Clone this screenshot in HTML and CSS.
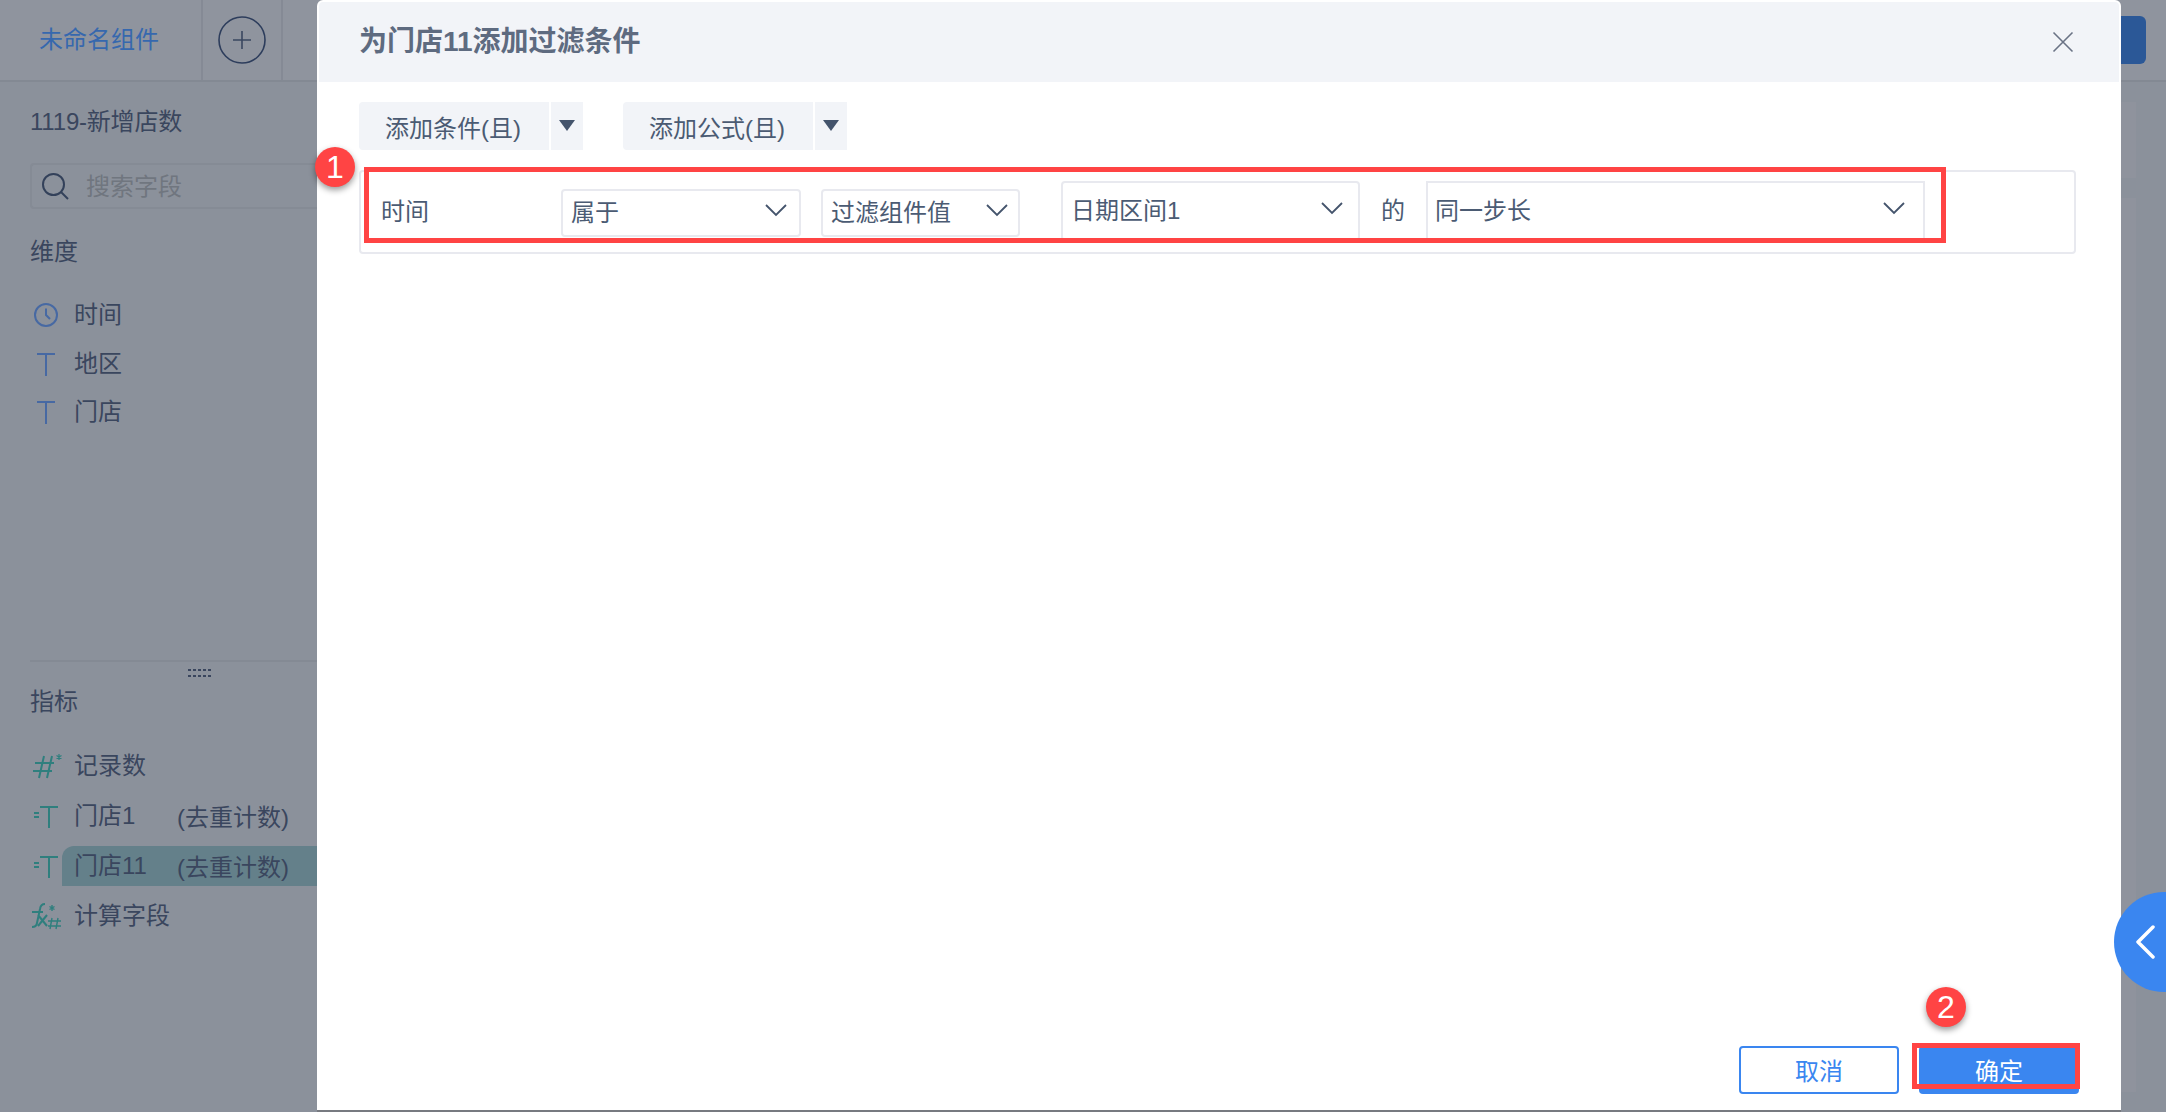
FILE: index.html
```html
<!DOCTYPE html>
<html lang="zh-CN">
<head>
<meta charset="utf-8">
<title>为门店11添加过滤条件</title>
<link rel="stylesheet" href="styles.css">
</head>
<body>
<div class="app">
  <header class="topbar">
    <div class="tab">未命名组件</div>
    <div class="tab-add">
      <svg width="48" height="48" viewBox="0 0 48 48"><circle cx="24" cy="24" r="23" fill="none" stroke="#2d3d5c" stroke-width="1.6"/><path d="M24 15v18M15 24h18" stroke="#3a4760" stroke-width="1.6"/></svg>
    </div>
    <div class="tab-rest"></div>
    <div class="publish"></div>
  </header>
  <div class="workspace">
    <aside class="sidebar">
      <div class="dataset">1119-新增店数</div>
      <div class="search">
        <svg width="28" height="28" viewBox="0 0 28 28"><circle cx="12.500" cy="12.500" r="10.500" fill="none" stroke="#33415a" stroke-width="2"/><path d="M20 20l7 7" stroke="#33415a" stroke-width="2"/></svg>
        <span>搜索字段</span>
      </div>
      <div class="group-title dim-title">维度</div>
      <ul class="fields">
        <li class="field"><svg class="ficon" width="26" height="26" viewBox="0 0 26 26"><circle cx="13" cy="13" r="11" fill="none" stroke="#4769a3" stroke-width="2"/><path d="M13 6.500V13l4 4" fill="none" stroke="#4769a3" stroke-width="2"/></svg><span>时间</span></li>
        <li class="field"><svg class="ficon" width="26" height="26" viewBox="0 0 26 26"><path d="M4 3h18M13 3v22" fill="none" stroke="#4769a3" stroke-width="2"/></svg><span>地区</span></li>
        <li class="field"><svg class="ficon" width="26" height="26" viewBox="0 0 26 26"><path d="M4 3h18M13 3v22" fill="none" stroke="#4769a3" stroke-width="2"/></svg><span>门店</span></li>
      </ul>
      <div class="measures">
        <div class="grip"></div>
        <div class="group-title">指标</div>
        <ul class="fields measure-list">
          <li class="field"><svg class="ficon" width="32" height="30" viewBox="0 0 32 30"><path d="M9 27l5-22M17 27l5-22M5 12h19M3 20h19" fill="none" stroke="#2f7f7e" stroke-width="2"/><path d="M29 3v6M26.500 4.500l5 3M31.500 4.500l-5 3" fill="none" stroke="#2f7f7e" stroke-width="1.200"/></svg><span>记录数</span></li>
          <li class="field"><svg class="ficon" width="32" height="30" viewBox="0 0 32 30"><path d="M4 12h5M4 16h5M10 6h18M19 6v21" fill="none" stroke="#2f7f7e" stroke-width="2"/></svg><span class="fname">门店1</span><span class="fagg">(去重计数)</span></li>
          <li class="field field-active"><svg class="ficon" width="32" height="30" viewBox="0 0 32 30"><path d="M4 12h5M4 16h5M10 6h18M19 6v21" fill="none" stroke="#2f7f7e" stroke-width="2"/></svg><span class="fname">门店11</span><span class="fagg">(去重计数)</span></li>
          <li class="field"><svg class="ficon" width="32" height="30" viewBox="0 0 32 30"><path d="M15 3c-3.500 0-4.500 1.500-5 5L7 22c-.5 3-2 4-5 4M2 11h11M8 14l9 11M17 14l-9 11" fill="none" stroke="#2f7f7e" stroke-width="2"/><path d="M22 4v6M19.500 5.500l5 3M24.500 5.500l-5 3M22 17l-2 11M28 17l-2 11M18 20h13M18 25h13" fill="none" stroke="#2f7f7e" stroke-width="1.400"/></svg><span>计算字段</span></li>
        </ul>
      </div>
    </aside>
    <div class="canvas">
      <div class="panel panel-top"></div>
      <div class="panel panel-bottom"></div>
    </div>
  </div>
</div>

<section class="dialog">
  <div class="dialog-head">
    <h1>为门店11添加过滤条件</h1>
    <svg width="22" height="22" viewBox="0 0 22 22"><path d="M1.500 1.500l19 19M20.500 1.500l-19 19" stroke="#6a7385" stroke-width="1.600"/></svg>
  </div>
  <div class="toolbar">
    <div class="split"><button class="split-main">添加条件(且)</button><button class="split-caret"><i></i></button></div>
    <div class="split"><button class="split-main">添加公式(且)</button><button class="split-caret"><i></i></button></div>
  </div>
  <div class="condition">
    <span class="cond-label">时间</span>
    <div class="select sel-op"><span>属于</span><svg width="22" height="13" viewBox="0 0 22 13"><path d="M1 1l10 10L21 1" fill="none" stroke="#44546c" stroke-width="1.800"/></svg></div>
    <div class="select sel-type"><span>过滤组件值</span><svg width="22" height="13" viewBox="0 0 22 13"><path d="M1 1l10 10L21 1" fill="none" stroke="#44546c" stroke-width="1.800"/></svg></div>
    <div class="select sel-tall sel-widget"><span>日期区间1</span><svg width="22" height="13" viewBox="0 0 22 13"><path d="M1 1l10 10L21 1" fill="none" stroke="#44546c" stroke-width="1.800"/></svg></div>
    <span class="cond-of">的</span>
    <div class="select sel-tall sel-step"><span>同一步长</span><svg width="22" height="13" viewBox="0 0 22 13"><path d="M1 1l10 10L21 1" fill="none" stroke="#44546c" stroke-width="1.800"/></svg></div>
  </div>
  <div class="dialog-foot">
    <button class="btn btn-ghost">取消</button>
    <button class="btn btn-primary">确定</button>
  </div>
</section>

<div class="mark mark-row"></div>
<div class="mark mark-ok"></div>
<div class="badge badge-1">1</div>
<div class="badge badge-2">2</div>
<div class="side-toggle">
  <svg width="20" height="34" viewBox="0 0 20 34"><path d="M18 2L3 17l15 15" fill="none" stroke="#fff" stroke-width="3.500" stroke-linecap="round" stroke-linejoin="round"/></svg>
</div>
</body>
</html>
```
FILE: styles.css
```css
* { box-sizing: border-box; }
html, body { margin: 0; height: 100%; overflow: hidden; }
body {
  position: relative;
  width: 2166px;
  height: 1112px;
  font-family: "Liberation Sans", "Noto Sans CJK SC", sans-serif;
  font-size: 24px;
  color: #3a465e;
  background: #8b919b;
}
ul { list-style: none; margin: 0; padding: 0; }
button { font: inherit; border: 0; padding: 0; }

.app { display: flex; flex-direction: column; height: 100%; background: #8b919b; }
.topbar { display: flex; height: 82px; border-bottom: 2px solid #838993; background: #8f949e; flex: none; }
.tab { width: 201px; padding: 0 0 0 39px; line-height: 80px; color: #3668ae; }
.tab-add { width: 82px; display: flex; align-items: center; justify-content: center; border-left: 2px solid #858a95; border-right: 2px solid #858a95; }
.tab-rest { flex: 1; }
.publish { width: 100px; height: 48px; margin: 16px 20px 0 0; border-radius: 6px; background: #2b5897; }
.workspace { flex: 1; display: flex; }
.sidebar { width: 317px; padding: 0 0 0 30px; display: flex; flex-direction: column; }
.dataset { margin-top: 26px; line-height: 28px; letter-spacing: -.2px; }
.search { display: flex; align-items: center; gap: 17px; height: 46px; margin-top: 27px; padding-left: 9px; border: 2px solid #858b95; border-right: 0; border-radius: 4px 0 0 4px; color: #70767f; }
.search span { padding-bottom: 4px; }
.group-title { line-height: 28px; }
.dim-title { margin-top: 29px; }
.fields { margin-top: 25px; }
.field { display: flex; align-items: center; height: 48.500px; line-height: 40px; }
.ficon { flex: none; width: 32px; margin: 0 12px 0 0; }
.measures { margin-top: auto; margin-bottom: 171px; border-top: 2px solid #848a94; }
.grip { height: 12px; width: 25px; margin: 5px 0 0 157px; background-image: radial-gradient(circle, #3a465e 1.200px, transparent 1.500px); background-size: 5px 6px; }
.measures .group-title { margin-top: 9px; }
.measure-list { margin-top: 25px; }
.measure-list .field { height: 50px; }
.fname { width: 103px; }
.fagg { padding-top: 3px; }
.field-active { position: relative; isolation: isolate; }
.field-active::before { content: ""; position: absolute; left: 32px; top: 5px; right: 0; height: 40px; background: #64808a; border-radius: 12px 0 0 0; z-index: -1; }
.canvas { flex: 1; padding: 20px 30px 20px 0; display: flex; flex-direction: column; gap: 20px; }
.panel { background: #8f939d; }
.panel-top { height: 76px; }
.panel-bottom { flex: 1; }

.dialog { position: absolute; left: 317px; top: 0; width: 1804px; height: 1112px; background: #fff; border-radius: 6px 6px 0 0; border-bottom: 2px solid #777a80; display: flex; flex-direction: column; }
.dialog-head { display: flex; align-items: center; justify-content: space-between; height: 80px; margin: 2px 2px 0; padding: 0 45px 0 40px; background: #f2f4f8; border-radius: 4px 4px 0 0; flex: none; }
.dialog-head h1 { margin: 0; font-size: 28px; line-height: 36px; font-weight: 700; color: #5e6b80; }
.toolbar { display: flex; gap: 40px; margin: 20px 0 0 42px; flex: none; }
.split { display: flex; gap: 2px; }
.split-main { width: 190px; height: 48px; padding-right: 2px; background: #f2f4f8; color: #4b5b73; border-radius: 4px 0 0 4px; }
.split-caret { width: 32px; height: 48px; background: #f2f4f8; display: flex; align-items: flex-start; justify-content: center; padding-top: 18px; }
.split-caret i { display: block; width: 0; height: 0; border-left: 8px solid transparent; border-right: 8px solid transparent; border-top: 11px solid #44546c; }
.condition { display: flex; align-items: center; height: 84px; margin: 20px 0 0 42px; width: 1717px; padding: 0 0 3px 20px; border: 2px solid #e8e9ef; border-radius: 4px; color: #4b5b73; flex: none; }
.cond-label { width: 180px; margin-top: -3px; }
.select { display: flex; align-items: center; justify-content: space-between; height: 48px; padding: 0 12px 4px 8px; margin-top: 4px; border: 2px solid #e8e9ef; border-radius: 4px; color: #4b5b73; }
.sel-tall { height: 60px; margin-top: 0; }
.sel-op { width: 240px; margin-right: 20px; }
.sel-type { width: 199px; margin-right: 41px; padding-right: 10px; }
.sel-widget { width: 299px; padding-right: 15px; }
.cond-of { margin: -4px 21px 0; }
.sel-step { width: 499px; border-radius: 0; padding: 0 18px 4px 7px; }
.dialog-foot { margin-top: auto; display: flex; justify-content: flex-end; gap: 20px; padding: 0 42px 16px 0; }
.btn { width: 160px; height: 48px; padding: 0 0 2px; border-radius: 4px; text-align: center; }
.btn-ghost { background: #fff; border: 2px solid #3a86f0; color: #3a86f0; }
.btn-primary { background: #3a86f0; color: #fff; }

.mark { position: absolute; border: 5px solid #ff4444; }
.mark-row { left: 364px; top: 167px; width: 1582px; height: 76px; }
.mark-ok { left: 1912px; top: 1043px; width: 168px; height: 46px; }
.badge { position: absolute; width: 40px; height: 40px; border-radius: 50%; background: #ff4444; color: #fff; text-align: center; font-size: 32px; line-height: 40px; box-shadow: 0 3px 6px rgba(0, 0, 0, .4); }
.badge-1 { left: 315px; top: 147px; }
.badge-2 { left: 1926px; top: 987px; }
.side-toggle { position: absolute; left: 2114px; top: 892px; width: 100px; height: 100px; border-radius: 50%; background: #3a86f0; display: flex; align-items: center; padding-left: 21px; }
.side-toggle svg { flex: none; }
```
